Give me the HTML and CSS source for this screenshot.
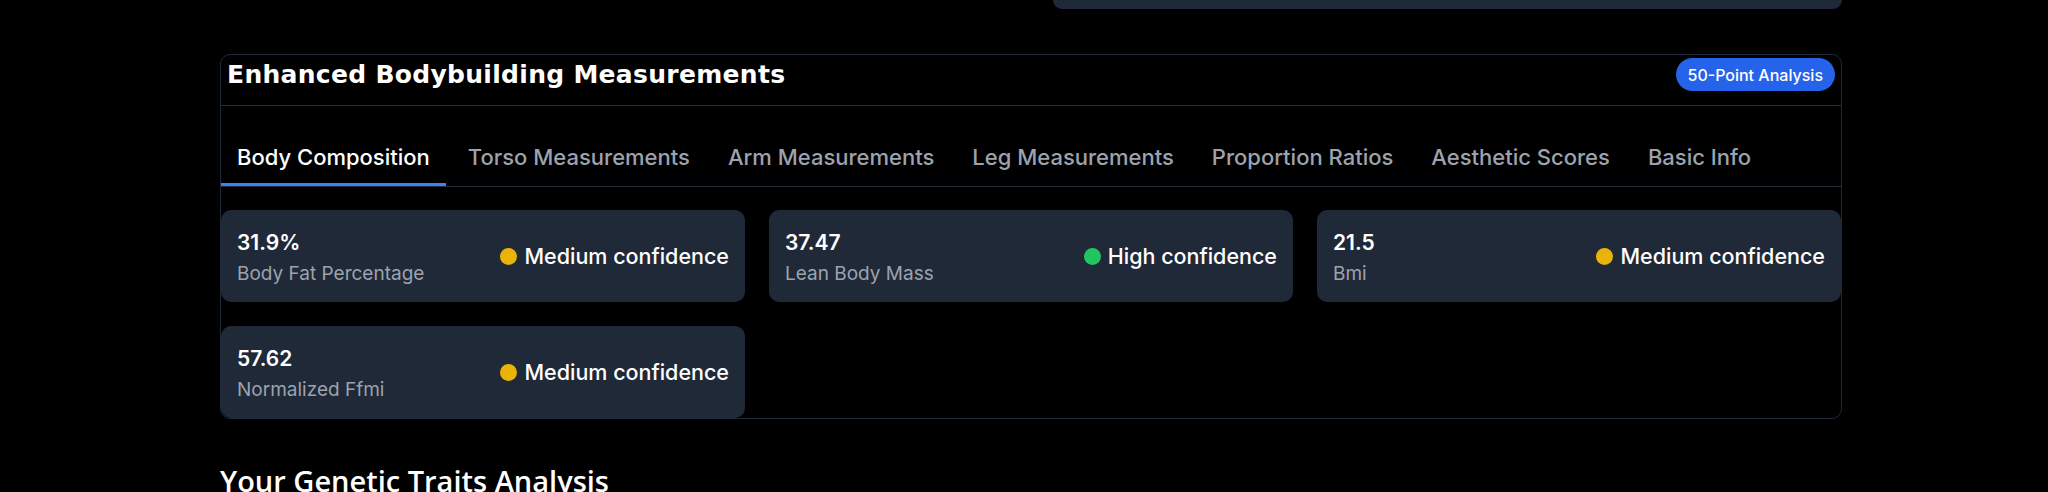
FILE: index.html
```html
<!DOCTYPE html>
<html lang="en">
<head>
<meta charset="utf-8">
<title>Enhanced Bodybuilding Measurements</title>
<link rel="stylesheet" href="styles.css">
</head>
<body>
<div class="page">
  <div class="top-row">
    <div class="top-panel"></div>
  </div>

  <section class="card">
    <header class="card-header">
      <h2 class="card-title">Enhanced Bodybuilding Measurements</h2>
      <span class="badge">50-Point Analysis</span>
    </header>

    <nav class="tabs">
      <button class="tab active">Body Composition</button>
      <button class="tab">Torso Measurements</button>
      <button class="tab">Arm Measurements</button>
      <button class="tab">Leg Measurements</button>
      <button class="tab">Proportion Ratios</button>
      <button class="tab">Aesthetic Scores</button>
      <button class="tab">Basic Info</button>
    </nav>

    <div class="metrics">
      <div class="metric">
        <div class="metric-info">
          <div class="metric-value">31.9%</div>
          <div class="metric-label">Body Fat Percentage</div>
        </div>
        <div class="confidence"><span class="dot dot-medium"></span>Medium confidence</div>
      </div>
      <div class="metric">
        <div class="metric-info">
          <div class="metric-value">37.47</div>
          <div class="metric-label">Lean Body Mass</div>
        </div>
        <div class="confidence"><span class="dot dot-high"></span>High confidence</div>
      </div>
      <div class="metric">
        <div class="metric-info">
          <div class="metric-value">21.5</div>
          <div class="metric-label">Bmi</div>
        </div>
        <div class="confidence"><span class="dot dot-medium"></span>Medium confidence</div>
      </div>
      <div class="metric">
        <div class="metric-info">
          <div class="metric-value">57.62</div>
          <div class="metric-label">Normalized Ffmi</div>
        </div>
        <div class="confidence"><span class="dot dot-medium"></span>Medium confidence</div>
      </div>
    </div>
  </section>

  <h2 class="section-title">Your Genetic Traits Analysis</h2>
</div>
</body>
</html>
```

FILE: styles.css
```css
* { box-sizing: border-box; }

html, body {
  margin: 0;
  padding: 0;
  background: #000000;
}

body {
  font-family: Inter, "Noto Sans", "Liberation Sans", sans-serif;
  color: #ffffff;
}

.page {
  width: 1622px;
  margin-left: 220px;
}

.top-row {
  display: flex;
  justify-content: flex-end;
}

.top-panel {
  width: 789px;
  height: 9px;
  background: #1f2937;
  border-radius: 0 0 10px 10px;
}

.card {
  margin-top: 45px;
  border: 1px solid #1f2937;
  border-radius: 10px;
  overflow: hidden;
}

.card-header {
  display: flex;
  align-items: center;
  justify-content: space-between;
  padding: 3px 6px 14px 6px;
  border-bottom: 1px solid #242d3a;
}

.card-title {
  margin: 0;
  font-family: "DejaVu Sans", "Open Sans", sans-serif;
  font-weight: 700;
  font-size: 25px;
  letter-spacing: 0.3px;
  line-height: 32px;
  color: #ffffff;
}

.badge {
  display: inline-flex;
  align-items: center;
  height: 33px;
  padding: 0 12px;
  border-radius: 17px;
  background: #2563eb;
  color: #ffffff;
  font-size: 16px;
  font-weight: 500;
}

.tabs {
  display: flex;
  gap: 6px;
  padding-top: 25px;
  border-bottom: 1px solid #242d3a;
}

.tab {
  background: none;
  border: none;
  border-bottom: 3px solid transparent;
  padding: 12px 16px 12px 16px;
  font-family: Inter, "Noto Sans", sans-serif;
  font-size: 22px;
  font-weight: 500;
  line-height: 28px;
  color: #9ca3af;
  cursor: pointer;
}

.tab.active {
  color: #ffffff;
  border-bottom-color: #3b82f6;
}

.metrics {
  display: grid;
  grid-template-columns: repeat(3, 1fr);
  gap: 24px;
  margin-top: 23px;
}

.metric {
  display: flex;
  align-items: center;
  justify-content: space-between;
  height: 92px;
  padding: 0 16px;
  background: #1f2937;
  border-radius: 10px;
}

.metric-info {
  padding-top: 5px;
}

.metric-value {
  font-size: 21px;
  font-weight: 600;
  line-height: 28px;
  color: #ffffff;
}

.metric-label {
  margin-top: 3px;
  font-size: 19px;
  line-height: 28px;
  color: #9ca3af;
}

.confidence {
  display: flex;
  align-items: center;
  gap: 7px;
  font-size: 21.5px;
  font-weight: 500;
  color: #ffffff;
}

.dot {
  width: 17px;
  height: 17px;
  border-radius: 50%;
}

.dot-medium { background: #eab308; }
.dot-high { background: #22c55e; }

.section-title {
  margin: 44px 0 0 0;
  font-family: "Open Sans", Lato, sans-serif;
  font-weight: 600;
  font-size: 29px;
  line-height: 36px;
  color: #ffffff;
}
```
